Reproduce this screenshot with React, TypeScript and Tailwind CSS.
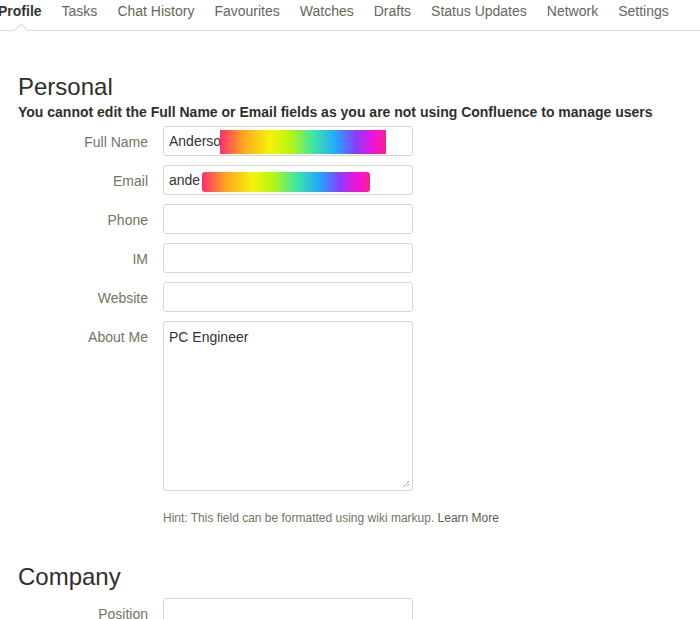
const TABS = ['Profile', 'Tasks', 'Chat History', 'Favourites', 'Watches', 'Drafts', 'Status Updates', 'Network', 'Settings'];

const FIELDS = [
    { label: 'Full Name', value: 'Anderso', redact: 'left-[56px] w-[166px] top-[3px] h-[24px] rounded-none' },
    { label: 'Email', value: 'ande', redact: 'left-[38px] w-[168px] top-[6px] h-[20px] rounded-[3px]' },
    { label: 'Phone', value: '' },
    { label: 'IM', value: '' },
    { label: 'Website', value: '' },
];

const rainbow = 'bg-[linear-gradient(90deg,#ff2d6f_0%,#ffa51f_14%,#f7f20a_30%,#b8f50f_42%,#3ee7a4_56%,#24a7ff_70%,#8a3cff_82%,#ef12d9_92%,#ff1f9a_100%)]';

const Row = ({ label, children }: { label: string; children: React.ReactNode }) => (
    <div className="flex items-start">
        <div className="w-[148px] text-right pt-[6px] text-[14px] text-[#737363]">{label}</div>
        <div className="ml-[15px]">{children}</div>
    </div>
);

export default function App() {
    return (
        <div className="w-[700px] h-[619px] overflow-hidden bg-white font-['Liberation_Sans',Arial,sans-serif] text-[14px]">
            {/* tabs */}
            <div className="relative h-[31px] border-b border-[#e2e2da]">
                <div className="flex -ml-[2px] pt-[2px]">
                    {TABS.map((t, i) => (
                        <div
                            key={t}
                            className={`${i === 0 ? 'font-bold text-[#333333] pr-[10px]' : 'text-[#66665a] px-[10px]'} leading-[18px] whitespace-nowrap`}
                        >
                            {t}
                        </div>
                    ))}
                </div>
                <div className="absolute left-[13px] top-[23px] w-0 h-0 border-x-[8px] border-x-transparent border-b-[8px] border-b-[#e2e2da]" />
                <div className="absolute left-[14px] top-[25px] w-0 h-0 border-x-[7px] border-x-transparent border-b-[7px] border-b-white" />
            </div>

            <div className="pl-[18px]">
                <h2 className="mt-[42px] text-[24px] leading-[28px] text-[#2f2f2a]">Personal</h2>
                <p className="mt-[3px] font-bold text-[#2f2f2a] leading-[16px]">
                    You cannot edit the Full Name or Email fields as you are not using Confluence to manage users
                </p>
            </div>

            <div className="mt-[6px] flex flex-col gap-[9px]">
                {FIELDS.map((f) => (
                    <Row key={f.label} label={f.label}>
                        <div className="relative w-[250px] h-[30px] border border-[#d8d8d0] rounded-[3px] bg-white px-[5px] flex items-center text-[#333333]">
                            {f.value}
                            {f.redact && <div className={`absolute ${f.redact} ${rainbow}`} />}
                        </div>
                    </Row>
                ))}
                <Row label="About Me">
                    <div className="relative w-[250px] h-[170px] border border-[#d8d8d0] rounded-[3px] bg-white px-[5px] pt-[6px] text-[#333333] leading-[18px]">
                        PC Engineer
                        <svg className="absolute right-[2px] bottom-[2px]" width="8" height="8" viewBox="0 0 8 8">
                            <path d="M7 1 L1 7 M7 4 L4 7" stroke="#777" strokeWidth="1" strokeDasharray="1 1" />
                        </svg>
                    </div>
                    <p className="mt-[20px] text-[12px] text-[#737363] leading-[14px]">
                        Hint: This field can be formatted using wiki markup. <span className="text-[#5c5c50]">Learn More</span>
                    </p>
                </Row>
            </div>

            <div className="pl-[18px]">
                <h2 className="mt-[38px] text-[24px] leading-[28px] text-[#2f2f2a]">Company</h2>
            </div>
            <div className="mt-[7px]">
                <Row label="Position">
                    <div className="w-[250px] h-[30px] border border-[#d8d8d0] rounded-[3px] bg-white" />
                </Row>
            </div>
        </div>
    );
}
